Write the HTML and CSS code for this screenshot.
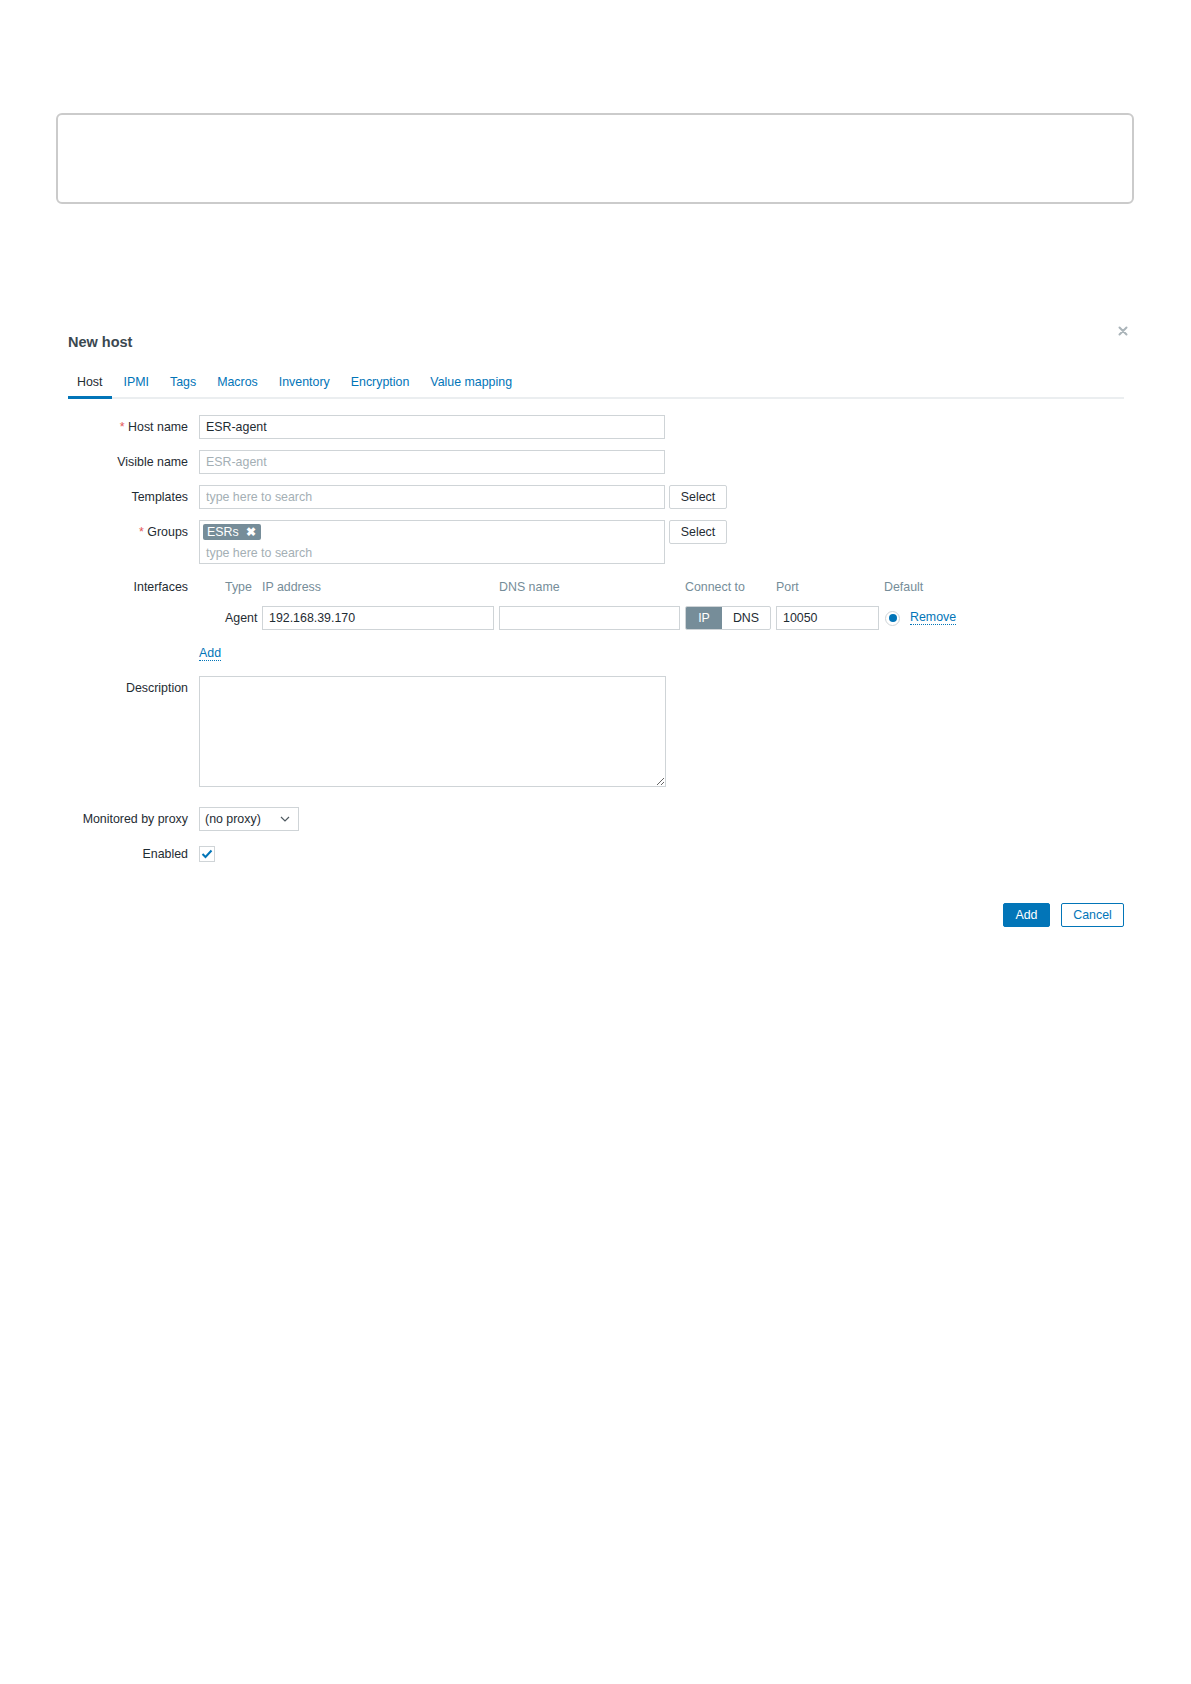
FILE: index.html
```html
<!DOCTYPE html>
<html lang="en">

<head>
<meta charset="UTF-8">
<meta name="viewport" content="width=device-width, initial-scale=1.0">
<title>New host</title>
<link rel="stylesheet" href="styles.css">
</head>

<body>

<div class="banner"></div>

<div class="dialog">
    <h4 class="dialog-title">New host</h4>
    <span class="dialog-close">
        <svg width="10" height="10" viewBox="0 0 10 10"><path d="M1.5 1.5 L8.5 8.5 M8.5 1.5 L1.5 8.5" stroke="#aab4b9" stroke-width="2" stroke-linecap="round"/></svg>
    </span>

    <ul class="tabs">
        <li class="tab active">Host</li>
        <li class="tab">IPMI</li>
        <li class="tab">Tags</li>
        <li class="tab">Macros</li>
        <li class="tab">Inventory</li>
        <li class="tab">Encryption</li>
        <li class="tab">Value mapping</li>
    </ul>

    <form class="host-form">
        <div class="form-row">
            <label class="form-label required">Host name</label>
            <input type="text" class="text-input wide" value="ESR-agent">
        </div>
        <div class="form-row">
            <label class="form-label">Visible name</label>
            <input type="text" class="text-input wide" placeholder="ESR-agent">
        </div>
        <div class="form-row">
            <label class="form-label">Templates</label>
            <input type="text" class="text-input wide" placeholder="type here to search">
            <button type="button" class="btn-alt">Select</button>
        </div>
        <div class="form-row">
            <label class="form-label required">Groups</label>
            <div class="multiselect">
                <span class="chip">ESRs <b class="chip-x">&#x2716;</b></span>
                <span class="ms-placeholder">type here to search</span>
            </div>
            <button type="button" class="btn-alt">Select</button>
        </div>
        <div class="form-row">
            <label class="form-label">Interfaces</label>
            <div class="interfaces">
                <span class="if-head if-type">Type</span>
                <span class="if-head">IP address</span>
                <span class="if-head">DNS name</span>
                <span class="if-head">Connect to</span>
                <span class="if-head">Port</span>
                <span class="if-head">Default</span>
                <span></span>

                <span class="if-type">Agent</span>
                <input type="text" class="text-input" value="192.168.39.170">
                <input type="text" class="text-input">
                <div class="toggle">
                    <span class="toggle-item on">IP</span>
                    <span class="toggle-item">DNS</span>
                </div>
                <input type="text" class="text-input" value="10050">
                <span class="radio"><span class="radio-dot"></span></span>
                <a class="link">Remove</a>
            </div>
        </div>
        <div class="form-row add-row">
            <span class="form-label"></span>
            <a class="link add-link">Add</a>
        </div>
        <div class="form-row desc-row">
            <label class="form-label">Description</label>
            <textarea class="text-area"></textarea>
        </div>
        <div class="form-row">
            <label class="form-label">Monitored by proxy</label>
            <div class="select-box">
                <span>(no proxy)</span>
                <svg width="10" height="6" viewBox="0 0 10 6"><path d="M1 1 L5 5 L9 1" fill="none" stroke="#4f5a61" stroke-width="1.2"/></svg>
            </div>
        </div>
        <div class="form-row">
            <label class="form-label">Enabled</label>
            <span class="checkbox">
                <svg width="12" height="10" viewBox="0 0 12 10"><path d="M1.5 5 L4.5 8 L10.5 1.5" fill="none" stroke="#0275b8" stroke-width="2"/></svg>
            </span>
        </div>
    </form>

    <div class="dialog-footer">
        <button type="button" class="btn-main">Add</button>
        <button type="button" class="btn-outline">Cancel</button>
    </div>
</div>

</body>
</html>
```

FILE: styles.css
```css
body { margin: 0; font-family: "Liberation Sans", Arial, sans-serif; font-size: 12.4px; color: #1f2c33; background: #fff; }

.banner { height: 87px; margin: 113px 57px 0 56px; border: 2px solid #cbcbcb; border-radius: 6px; }

.dialog { position: relative; margin: 128px 67px 0 68px; }
.dialog-title { margin: 0; font-size: 14.5px; line-height: 20px; font-weight: bold; color: #3b4850; }
.dialog-close { position: absolute; top: -6px; right: -4px; width: 10px; height: 10px; display: flex; }

.tabs { list-style: none; margin: 15px 0 0; padding: 0; display: flex; border-bottom: 2px solid #ebeef0; }
.tab { padding: 8px 10px 7px 9px; margin-right: 2px; line-height: 14px; color: #0275b8; border-bottom: 3px solid transparent; margin-bottom: -2px; }
.tab.active { color: #1f2c33; border-bottom-color: #0275b8; }

.host-form { padding-top: 16px; }
.form-row { display: flex; align-items: flex-start; margin-bottom: 11px; }
.form-label { flex: none; width: 120px; margin-right: 11px; text-align: right; line-height: 24px; }
.form-label.required::before { content: "* "; color: #e45959; }

.text-input { box-sizing: border-box; height: 24px; padding: 0 6px; border: 1px solid #cfd4d7; font: inherit; color: #1f2c33; background: #fff; margin: 0; min-width: 0; }
.text-input::placeholder { color: #a4afb5; }
.text-input.wide { width: 466px; }

.btn-alt { box-sizing: border-box; height: 24px; width: 58px; margin-left: 4px; border: 1px solid #cfd4d7; border-radius: 2px; background: #fff; font: inherit; color: #1f2c33; padding: 0; }

.multiselect { box-sizing: border-box; width: 466px; height: 44px; border: 1px solid #cfd4d7; padding: 3px 3px 0; display: flex; flex-direction: column; align-items: flex-start; }
.chip { background: #768d99; color: #fff; line-height: 16px; padding: 0 5px 0 4px; border-radius: 2px; }
.chip-x { font-size: 11.5px; margin-left: 4px; }
.ms-placeholder { color: #a4afb5; line-height: 18px; margin-top: 4px; padding-left: 3px; }

.interfaces { display: grid; grid-template-columns: 58px 232px 181px 86px 103px 19px auto; column-gap: 5px; row-gap: 7px; align-items: center; }
.if-head { color: #768d99; line-height: 24px; }
.if-type { padding-left: 26px; }
.interfaces .text-input { width: 100%; }

.toggle { display: flex; height: 24px; box-sizing: border-box; border: 1px solid #cfd4d7; border-radius: 2px; overflow: hidden; }
.toggle-item { flex: 1; display: flex; align-items: center; justify-content: center; }
.toggle-item.on { flex: none; width: 36px; background: #768d99; color: #fff; }

.radio { box-sizing: border-box; width: 15px; height: 15px; margin-left: 1px; border: 1px solid #cfd4d7; border-radius: 50%; display: flex; align-items: center; justify-content: center; }
.radio-dot { width: 8px; height: 8px; border-radius: 50%; background: #0275b8; }

.link { color: #0275b8; border-bottom: 1px dotted #0275b8; line-height: 13px; cursor: pointer; }
.interfaces .link { justify-self: start; margin-left: 2px; }
.add-row { margin-bottom: 15px; }
.add-link { margin-top: 6px; }

.desc-row { margin-bottom: 20px; }
.text-area { box-sizing: border-box; width: 467px; height: 111px; border: 1px solid #cfd4d7; margin: 0; font: inherit; }

.select-box { box-sizing: border-box; width: 100px; height: 24px; border: 1px solid #cfd4d7; padding: 0 8px 0 5px; display: flex; align-items: center; justify-content: space-between; }
.checkbox { box-sizing: border-box; width: 16px; height: 16px; margin-top: 4px; border: 1px solid #cfd4d7; display: flex; align-items: center; justify-content: center; }

.dialog-footer { display: flex; justify-content: flex-end; gap: 11px; margin-top: 37px; }
.btn-main, .btn-outline { box-sizing: border-box; height: 24px; border-radius: 2px; font: inherit; padding: 0; }
.btn-main { width: 47px; background: #0275b8; border: 1px solid #0275b8; color: #fff; }
.btn-outline { width: 63px; background: #fff; border: 1px solid #0275b8; color: #0275b8; }
```
